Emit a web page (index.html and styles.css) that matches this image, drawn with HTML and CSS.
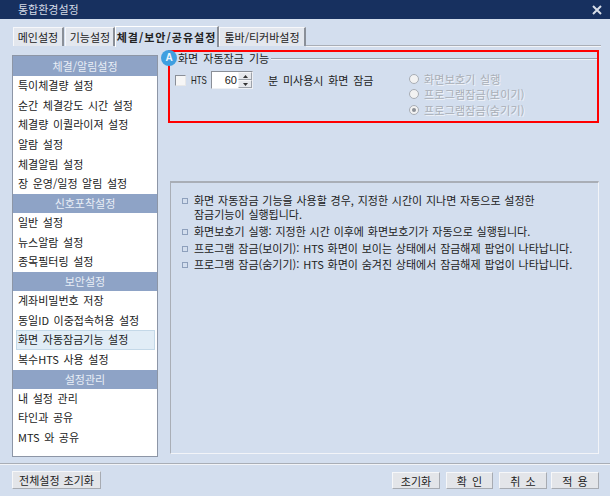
FILE: index.html
```html
<!DOCTYPE html>
<html lang="ko">
<head>
<meta charset="utf-8">
<title>통합환경설정</title>
<link rel="stylesheet" href="styles.css">
</head>
<body>
<div class="window">
  <header class="titlebar">
    <span class="title">통합환경설정</span>
    <svg class="close" width="10" height="10" viewBox="0 0 10 10"><path d="M1 1L9 9M9 1L1 9" stroke="#d8dee8" stroke-width="2"/></svg>
  </header>
  <nav class="tabs">
    <div class="tab tab-a">메인설정</div>
    <div class="tab tab-b">기능설정</div>
    <div class="tab active">체결/보안/공유설정</div>
    <div class="tab tab-d">툴바/티커바설정</div>
    <div class="tab-line"></div>
  </nav>
  <div class="content">
    <aside class="sidebar">
      <div class="head head-first">체결/알림설정</div>
      <div class="item">특이체결량 설정</div>
      <div class="item">순간 체결강도 시간 설정</div>
      <div class="item">체결량 이퀄라이져 설정</div>
      <div class="item">알람 설정</div>
      <div class="item">체결알림 설정</div>
      <div class="item">장 운영/일정 알림 설정</div>
      <div class="head">신호포착설정</div>
      <div class="item">일반 설정</div>
      <div class="item">뉴스알람 설정</div>
      <div class="item">종목필터링 설정</div>
      <div class="head">보안설정</div>
      <div class="item">계좌비밀번호 저장</div>
      <div class="item">동일ID 이중접속허용 설정</div>
      <div class="item selected">화면 자동잠금기능 설정</div>
      <div class="item">복수HTS 사용 설정</div>
      <div class="head">설정관리</div>
      <div class="item">내 설정 관리</div>
      <div class="item">타인과 공유</div>
      <div class="item">MTS 와 공유</div>
    </aside>
    <main class="right">
      <section class="group">
        <div class="legend"><span class="legend-text">화면 자동잠금 기능</span><span class="legend-line"></span></div>
        <div class="group-body">
          <div class="lock-row">
            <span class="check"></span>
            <span class="hts">HTS</span>
            <div class="spin">
              <span class="spin-value">60</span>
              <div class="spin-btns">
                <span class="spin-btn"><svg width="5" height="3" viewBox="0 0 5 3"><path d="M2.5 0L5 3H0Z" fill="#333"/></svg></span>
                <span class="spin-btn"><svg width="5" height="3" viewBox="0 0 5 3"><path d="M0 0H5L2.5 3Z" fill="#333"/></svg></span>
              </div>
            </div>
            <span class="lock-label">분 미사용시 화면 잠금</span>
          </div>
          <div class="radios">
            <label class="radio"><span class="dot"></span>화면보호기 실행</label>
            <label class="radio"><span class="dot"></span>프로그램잠금(보이기)</label>
            <label class="radio"><span class="dot on"></span>프로그램잠금(숨기기)</label>
          </div>
        </div>
        <div class="redbox"></div>
        <div class="badge">A</div>
      </section>
      <section class="info">
        <ul class="info-list">
          <li class="info-first">화면 자동잠금 기능을 사용할 경우, 지정한 시간이 지나면 자동으로 설정한<br>잠금기능이 실행됩니다.</li>
          <li>화면보호기 실행: 지정한 시간 이후에 화면보호기가 자동으로 실행됩니다.</li>
          <li>프로그램 잠금(보이기): HTS 화면이 보이는 상태에서 잠금해제 팝업이 나타납니다.</li>
          <li>프로그램 잠금(숨기기): HTS 화면이 숨겨진 상태에서 잠금해제 팝업이 나타납니다.</li>
        </ul>
      </section>
    </main>
  </div>
  <footer class="footer">
    <button class="btn btn-wide">전체설정 초기화</button>
    <div class="btn-group">
      <button class="btn">초기화</button>
      <button class="btn btn-narrow">확 인</button>
      <button class="btn">취 소</button>
      <button class="btn btn-last">적 용</button>
    </div>
  </footer>
</div>
</body>
</html>
```
FILE: styles.css
```css
* { box-sizing: border-box; }
html, body { margin: 0; padding: 0; }
body {
  width: 610px;
  height: 496px;
  overflow: hidden;
  background: #d3deee;
  font-family: "Noto Sans CJK KR", "Liberation Sans", sans-serif;
  font-size: 11px;
  color: #222;
}
.window { width: 610px; height: 496px; display: flex; flex-direction: column; }
.titlebar {
  height: 19px;
  flex: none;
  background: #17305f;
  color: #d5dbe6;
  display: flex;
  align-items: center;
  justify-content: space-between;
  padding: 0 8px 0 18px;
}
.title { font-size: 11px; line-height: 19px; }

.tabs {
  height: 28px;
  flex: none;
  display: flex;
  align-items: flex-end;
  padding-left: 13px;
}
.tab {
  height: 19px;
  margin-bottom: 1px;
  display: flex;
  align-items: center;
  justify-content: center;
  background: #e3e7ee;
  border-top: 1px solid #f6f7fa;
  border-left: 1px solid #f6f7fa;
  border-right: 2px solid #8a8f98;
  font-size: 11px;
  line-height: 1;
  white-space: nowrap;
}
.tab-a { width: 51px; }
.tab-b { width: 50px; margin-left: 1px; padding-left: 1px; }
.tab-d { width: 87px; }
.tab.active {
  width: 104px;
  height: 21px;
  margin-bottom: 0;
  font-weight: 700;
  letter-spacing: 1px;
  background: #d3deee;
  border-top: 1px solid #fff;
  border-left: 1px solid #fff;
}
.tab-line {
  flex: 1;
  height: 2px;
  margin-right: 9px;
  border-top: 1px solid #a9aeb6;
  border-bottom: 1px solid #f2f4f8;
}

.content {
  flex: 1;
  min-height: 0;
  display: flex;
  padding: 8px 11px 0 12px;
  gap: 12px;
}
.sidebar {
  width: 146px;
  height: 402px;
  flex: none;
  background: #fff;
  border: 1px solid #8d96a6;
  display: flex;
  flex-direction: column;
}
.head {
  height: 19px;
  flex: none;
  background: #8ea3c6;
  color: #e9eef6;
  text-align: center;
  line-height: 19px;
  font-size: 11px;
}
.head-first { height: 20px; line-height: 20px; }
.item {
  height: 19.67px;
  flex: none;
  line-height: 19px;
  padding-left: 5px;
  color: #222;
  white-space: nowrap;
  word-spacing: 1.5px;
}
.item.selected {
  margin: 0 2px 0 3px;
  padding-left: 1px;
  background: #e1edf6;
  border: 1px solid #c4d9e8;
  line-height: 17px;
}

.right { flex: 1; display: flex; flex-direction: column; min-width: 0; }
.group { position: relative; height: 129px; margin-top: -3px; flex: none; }
.legend {
  height: 13px;
  display: flex;
  align-items: center;
  padding-left: 8px;
}
.legend-text { font-size: 11px; word-spacing: 2px; line-height: 13px; }
.legend-line {
  flex: 1;
  height: 2px;
  margin: 0 0 0 2px;
  border-top: 1px solid #9aa3af;
  border-bottom: 1px solid #f0f3f8;
}
.group-body { position: relative; display: flex; padding: 6px 0 0 5px; }
.lock-row { display: flex; align-items: center; height: 18px; width: 232px; }
.check {
  width: 11px;
  height: 11px;
  background: #f6f6f6;
  border: 1px solid #8a8f98;
  border-right-color: #e8e8e8;
  border-bottom-color: #e8e8e8;
  flex: none;
}
.hts {
  margin-left: 5px;
  width: 20px;
  font-family: "Liberation Sans", sans-serif;
  font-size: 11px;
  flex: none;
  transform: scaleX(0.72);
  transform-origin: left center;
  white-space: nowrap;
}
.spin {
  width: 42px;
  height: 18px;
  flex: none;
  background: #fff;
  border: 1px solid #8a8f98;
  border-right-color: #eef0f4;
  border-bottom-color: #eef0f4;
  display: flex;
  align-items: center;
  justify-content: flex-end;
}
.spin-value { font-family: "Liberation Sans", sans-serif; font-size: 11px; margin-right: 1px; }
.spin-btns { width: 14px; height: 16px; display: flex; flex-direction: column; }
.spin-btn {
  flex: 1;
  background: #e6e8ec;
  border: 1px solid #f4f5f7;
  border-right-color: #9da2aa;
  border-bottom-color: #9da2aa;
  display: flex;
  align-items: center;
  justify-content: center;
}
.lock-label { margin-left: 15px; word-spacing: 1.7px; white-space: nowrap; }
.radios { display: flex; flex-direction: column; }
.radio {
  display: flex;
  align-items: center;
  height: 15.5px;
  color: #a9aeb6;
  text-shadow: 1px 1px 0 #f1f4f9;
  white-space: nowrap;
  word-spacing: 1px;
  letter-spacing: 0.2px;
  padding-left: 2px;
}
.dot {
  width: 10px;
  height: 10px;
  border-radius: 50%;
  background: #f2f2f2;
  border: 1px solid #a8adb5;
  margin-right: 5px;
  flex: none;
  display: flex;
  align-items: center;
  justify-content: center;
}
.dot.on::after {
  content: "";
  width: 4px;
  height: 4px;
  border-radius: 50%;
  background: #8c9097;
}
.redbox {
  position: absolute;
  left: -2px;
  top: -2px;
  width: 431px;
  height: 73px;
  border: 2.5px solid #f00;
  pointer-events: none;
}
.badge {
  position: absolute;
  left: -9px;
  top: -2px;
  width: 16px;
  height: 16px;
  border-radius: 50%;
  background: #3f9fe0;
  color: #eef6fc;
  font-family: "Liberation Sans", sans-serif;
  font-size: 10px;
  font-weight: 700;
  text-align: center;
  line-height: 16px;
}
.info {
  height: 273px;
  flex: none;
  border: 1px solid #f2f4f8;
  border-top: 2px solid #a9aeb6;
  border-left: 1px solid #a9aeb6;
  padding: 10px 0 0 23px;
}
.info-list { list-style: none; margin: 0; padding: 0; }
.info-list li {
  position: relative;
  line-height: 16.5px;
  white-space: nowrap;
  color: #222;
  word-spacing: 0.7px;
}
.info-list .info-first { line-height: 14px; margin-bottom: 2px; }
.info-list li::before {
  content: "";
  position: absolute;
  left: -12px;
  top: 6px;
  width: 4px;
  height: 4px;
  border: 1px solid #8ea0bc;
}
.info-list .info-first::before { top: 5px; }

.footer {
  height: 32px;
  margin-top: 7px;
  flex: none;
  border-top: 1px solid #f2f4f8;
  box-shadow: 0 -1px 0 #a9aeb6;
  display: flex;
  align-items: flex-start;
  justify-content: space-between;
  padding: 6px 11px 0 12px;
}
.btn {
  width: 48px;
  height: 17px;
  padding: 0;
  background: #e3e5e9;
  border: 1px solid #f6f7f9;
  border-right-color: #a7abb2;
  border-bottom-color: #a7abb2;
  font: inherit;
  font-size: 11px;
  color: #222;
  line-height: 14px;
  word-spacing: 2px;
}
.btn-wide { width: 89px; height: 18px; word-spacing: 1px; }
.btn-group { display: flex; gap: 6px; margin-top: 1px; }
.btn-narrow { width: 47px; }
.btn-last { margin-left: -2px; }
```
